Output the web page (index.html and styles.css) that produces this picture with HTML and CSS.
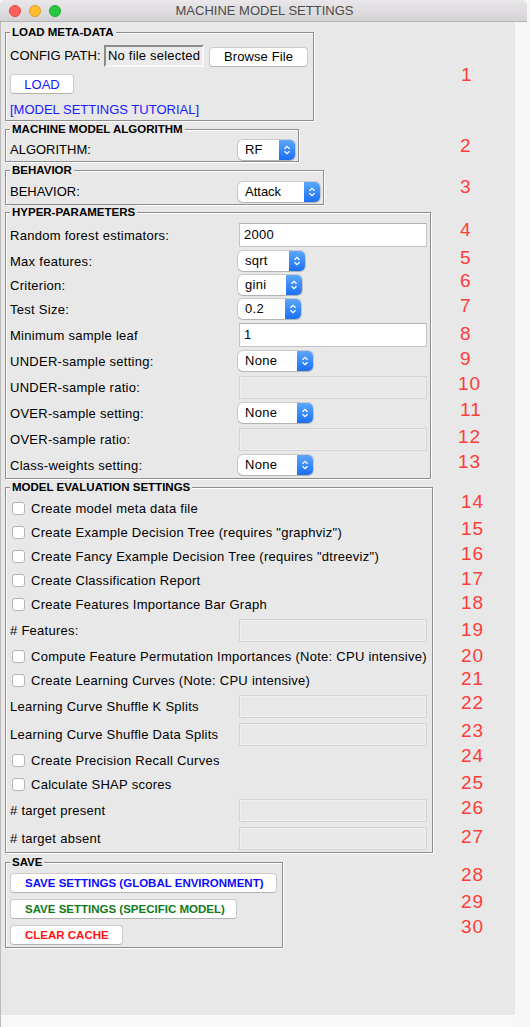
FILE: index.html
```html
<!DOCTYPE html>
<html>
<head>
<meta charset="utf-8">
<title>MACHINE MODEL SETTINGS</title>
<link rel="stylesheet" href="styles.css">
</head>
<body>
<div class="window">
  <div class="titlebar">
    <div class="lights"><span class="light red"></span><span class="light yellow"></span><span class="light green"></span></div>
    <div class="title">MACHINE MODEL SETTINGS</div>
    <div></div>
  </div>
  <div class="client">
    <div class="panel">
      <section class="frame f-load">
        <div class="frame-title">LOAD META-DATA</div>
        <div class="load-row">
          <span class="cfg-label">CONFIG PATH:</span>
          <span class="path-entry">No file selected</span>
          <span class="btn btn-browse">Browse File</span>
        </div>
        <div class="load-row2"><span class="btn btn-load">LOAD</span></div>
        <div class="link-row"><span class="link">[MODEL SETTINGS TUTORIAL]</span></div>
      </section>

      <section class="frame f-algo">
        <div class="frame-title">MACHINE MODEL ALGORITHM</div>
        <div class="row r23">
          <span class="lab">ALGORITHM:</span>
          <span class="select w58"><span class="val">RF</span><span class="arrows"><svg width="8" height="12" viewBox="0 0 8 12"><path d="M1.5 4.8L4 2.3l2.5 2.5M1.5 7.2L4 9.7l2.5-2.5" fill="none" stroke="#fff" stroke-width="1.3"/></svg></span></span>
        </div>
      </section>

      <section class="frame f-beh">
        <div class="frame-title">BEHAVIOR</div>
        <div class="row r25">
          <span class="lab">BEHAVIOR:</span>
          <span class="select w82"><span class="val">Attack</span><span class="arrows"><svg width="8" height="12" viewBox="0 0 8 12"><path d="M1.5 4.8L4 2.3l2.5 2.5M1.5 7.2L4 9.7l2.5-2.5" fill="none" stroke="#fff" stroke-width="1.3"/></svg></span></span>
        </div>
      </section>

      <section class="frame f-hyper">
        <div class="frame-title">HYPER-PARAMETERS</div>
        <div class="row t">
          <span class="lab">Random forest estimators:</span>
          <span class="entry">2000</span>
        </div>
        <div class="row">
          <span class="lab">Max features:</span>
          <span class="select w67"><span class="val">sqrt</span><span class="arrows"><svg width="8" height="12" viewBox="0 0 8 12"><path d="M1.5 4.8L4 2.3l2.5 2.5M1.5 7.2L4 9.7l2.5-2.5" fill="none" stroke="#fff" stroke-width="1.3"/></svg></span></span>
        </div>
        <div class="row">
          <span class="lab">Criterion:</span>
          <span class="select w64"><span class="val">gini</span><span class="arrows"><svg width="8" height="12" viewBox="0 0 8 12"><path d="M1.5 4.8L4 2.3l2.5 2.5M1.5 7.2L4 9.7l2.5-2.5" fill="none" stroke="#fff" stroke-width="1.3"/></svg></span></span>
        </div>
        <div class="row">
          <span class="lab">Test Size:</span>
          <span class="select w63"><span class="val">0.2</span><span class="arrows"><svg width="8" height="12" viewBox="0 0 8 12"><path d="M1.5 4.8L4 2.3l2.5 2.5M1.5 7.2L4 9.7l2.5-2.5" fill="none" stroke="#fff" stroke-width="1.3"/></svg></span></span>
        </div>
        <div class="row t">
          <span class="lab">Minimum sample leaf</span>
          <span class="entry">1</span>
        </div>
        <div class="row">
          <span class="lab">UNDER-sample setting:</span>
          <span class="select w75"><span class="val">None</span><span class="arrows"><svg width="8" height="12" viewBox="0 0 8 12"><path d="M1.5 4.8L4 2.3l2.5 2.5M1.5 7.2L4 9.7l2.5-2.5" fill="none" stroke="#fff" stroke-width="1.3"/></svg></span></span>
        </div>
        <div class="row t">
          <span class="lab">UNDER-sample ratio:</span>
          <span class="entry off"></span>
        </div>
        <div class="row">
          <span class="lab">OVER-sample setting:</span>
          <span class="select w75"><span class="val">None</span><span class="arrows"><svg width="8" height="12" viewBox="0 0 8 12"><path d="M1.5 4.8L4 2.3l2.5 2.5M1.5 7.2L4 9.7l2.5-2.5" fill="none" stroke="#fff" stroke-width="1.3"/></svg></span></span>
        </div>
        <div class="row t">
          <span class="lab">OVER-sample ratio:</span>
          <span class="entry off"></span>
        </div>
        <div class="row">
          <span class="lab">Class-weights setting:</span>
          <span class="select w75"><span class="val">None</span><span class="arrows"><svg width="8" height="12" viewBox="0 0 8 12"><path d="M1.5 4.8L4 2.3l2.5 2.5M1.5 7.2L4 9.7l2.5-2.5" fill="none" stroke="#fff" stroke-width="1.3"/></svg></span></span>
        </div>
      </section>

      <section class="frame f-eval">
        <div class="frame-title">MODEL EVALUATION SETTINGS</div>
        <div class="row"><span class="cb"></span><span>Create model meta data file</span></div>
        <div class="row"><span class="cb"></span><span>Create Example Decision Tree (requires "graphviz")</span></div>
        <div class="row"><span class="cb"></span><span>Create Fancy Example Decision Tree (requires "dtreeviz")</span></div>
        <div class="row"><span class="cb"></span><span>Create Classification Report</span></div>
        <div class="row"><span class="cb"></span><span>Create Features Importance Bar Graph</span></div>
        <div class="row t"><span class="lab"># Features:</span><span class="entry off"></span></div>
        <div class="row"><span class="cb"></span><span>Compute Feature Permutation Importances (Note: CPU intensive)</span></div>
        <div class="row"><span class="cb"></span><span>Create Learning Curves (Note: CPU intensive)</span></div>
        <div class="row t"><span class="lab">Learning Curve Shuffle K Splits</span><span class="entry off"></span></div>
        <div class="row t"><span class="lab">Learning Curve Shuffle Data Splits</span><span class="entry off"></span></div>
        <div class="row"><span class="cb"></span><span>Create Precision Recall Curves</span></div>
        <div class="row"><span class="cb"></span><span>Calculate SHAP scores</span></div>
        <div class="row t"><span class="lab"># target present</span><span class="entry off"></span></div>
        <div class="row t"><span class="lab"># target absent</span><span class="entry off"></span></div>
      </section>

      <section class="frame f-save">
        <div class="frame-title">SAVE</div>
        <div class="save-row"><span class="btn sbtn global">SAVE SETTINGS (GLOBAL ENVIRONMENT)</span></div>
        <div class="save-row"><span class="btn sbtn specific">SAVE SETTINGS (SPECIFIC MODEL)</span></div>
        <div class="save-row last"><span class="btn sbtn clear">CLEAR CACHE</span></div>
      </section>
    </div>
    <div class="side"></div>
  </div>
  <div class="bottom"></div>

  <div class="notes">
    <span class="n n1">1</span><span class="n n2">2</span><span class="n n3">3</span><span class="n n4">4</span><span class="n n5">5</span>
    <span class="n n6">6</span><span class="n n7">7</span><span class="n n8">8</span><span class="n n9">9</span><span class="n n10">10</span>
    <span class="n n11">11</span><span class="n n12">12</span><span class="n n13">13</span><span class="n n14">14</span><span class="n n15">15</span>
    <span class="n n16">16</span><span class="n n17">17</span><span class="n n18">18</span><span class="n n19">19</span><span class="n n20">20</span>
    <span class="n n21">21</span><span class="n n22">22</span><span class="n n23">23</span><span class="n n24">24</span><span class="n n25">25</span>
    <span class="n n26">26</span><span class="n n27">27</span><span class="n n28">28</span><span class="n n29">29</span><span class="n n30">30</span>
  </div>
</div>
</body>
</html>
```

FILE: styles.css
```css
* { box-sizing: border-box; }

body {
  margin: 0;
  width: 530px;
  height: 1027px;
  overflow: hidden;
  background: #f7f7f7;
  font-family: "Liberation Sans", Arial, sans-serif;
  font-size: 13px;
  color: #000;
}

.window {
  position: relative;
  width: 530px;
  height: 1027px;
}

/* ---------- title bar ---------- */
.titlebar {
  width: 527px;
  height: 22px;
  display: grid;
  grid-template-columns: 1fr auto 1fr;
  align-items: center;
  background: linear-gradient(#e9e7e9, #d4d2d4);
  border-bottom: 1px solid #b4b4b4;
  border-radius: 5px 5px 0 0;
}
.lights { display: flex; gap: 8px; padding-left: 9px; }
.light { width: 12px; height: 12px; border-radius: 50%; }
.red { background: #fe5f57; border: 1px solid #e2463f; }
.yellow { background: #febc2e; border: 1px solid #dfa023; }
.green { background: #28c840; border: 1px solid #1dad2b; }
.title {
  font-size: 13px;
  color: #4b4b4b;
  padding-left: 2px;
}

/* ---------- client ---------- */
.client { display: flex; height: 993px; }
.panel {
  width: 515px;
  background: #e8e8e8;
  border-left: 1px solid #bcbcbc;
  padding: 10px 0 0 4px;
}
.side { flex: 1; background: #f7f7f7; }
.bottom {
  width: 515px;
  height: 12px;
  background: #f8f8f8;
  border-left: 1px solid #bcbcbc;
}

/* ---------- label frames ---------- */
.frame {
  border: 1px solid #8d8d8d;
  box-shadow: 1px 1px 0 #fff, inset 1px 1px 0 #fff;
  padding: 0 3px 0 4px;
}
.frame-title {
  width: max-content;
  margin-top: -8px;
  margin-bottom: 2px;
  height: 14px;
  line-height: 14px;
  padding: 0 2px;
  font-size: 11.5px;
  font-weight: bold;
  background: #e8e8e8;
}
.f-load { width: 309px; margin-bottom: 8px; }
.f-algo { width: 294px; margin-bottom: 8px; }
.f-beh { width: 319px; margin-bottom: 7px; }
.f-hyper { width: 426px; margin-bottom: 8px; padding-bottom: 1px; }
.f-eval { width: 428px; margin-bottom: 9px; }
.f-save { width: 278px; }

/* ---------- load frame ---------- */
.load-row { display: flex; align-items: center; height: 29px; }
.cfg-label { width: 94px; }
.path-entry {
  width: 100px;
  height: 22px;
  line-height: 18px;
  padding-left: 2px;
  margin-right: 5px;
  background: #ebebeb;
  border: 2px solid;
  border-color: #8a8a8a #f6f6f6 #f6f6f6 #8a8a8a;
  letter-spacing: 0.2px;
}
.btn {
  display: flex;
  align-items: center;
  justify-content: center;
  height: 20px;
  background: #fff;
  border: 1px solid #cbcbcb;
  border-bottom-color: #b3b3b3;
  border-radius: 4px;
}
.btn-browse { width: 99px; margin-top: 2px; letter-spacing: 0.1px; }
.load-row2 { display: flex; align-items: center; height: 28px; }
.btn-load { width: 64px; color: #1515ff; }
.link-row { display: flex; align-items: center; height: 22px; }
.link { color: #1a1aff; }

/* ---------- rows ---------- */
.row { display: flex; align-items: center; height: 24px; letter-spacing: 0.27px; }
.row.t { height: 28px; }
.row.r23 { height: 23px; letter-spacing: 0; }
.row.r25 { height: 25px; letter-spacing: 0; }
.lab { width: 228px; flex: none; }

.entry {
  width: 188px;
  height: 24px;
  margin-left: 1px;
  padding-left: 4px;
  line-height: 22px;
  background: #fff;
  border: 1px solid #c4c4c4;
  border-top-color: #b2b2b2;
}
.entry.off {
  height: 23px;
  background: #e8e8e8;
  border: 1px solid #d3d3d3;
  box-shadow: inset 0 0 0 1px #efefef;
}

.select {
  display: flex;
  height: 20px;
  background: #fff;
  border-radius: 5px;
  box-shadow: 0 0 0 1px rgba(0, 0, 0, 0.13), 0 1px 1px rgba(0, 0, 0, 0.12);
}
.select .val { flex: 1; padding-left: 7px; line-height: 20px; }
.select .arrows {
  width: 16px;
  display: flex;
  align-items: center;
  justify-content: center;
  background: linear-gradient(#5ba7fd, #1b6ff4);
  border-radius: 0 5px 5px 0;
}
.w58 { width: 58px; }
.w82 { width: 82px; }
.w67 { width: 67px; }
.w64 { width: 64px; }
.w63 { width: 63px; }
.w75 { width: 75px; }

.cb {
  flex: none;
  width: 13px;
  height: 13px;
  margin: 0 6px 0 2px;
  background: #fff;
  border: 1px solid #b6b6b6;
  border-radius: 3px;
}

/* ---------- save frame ---------- */
.save-row { display: flex; align-items: flex-start; height: 26px; padding-top: 2px; }
.save-row.last { height: 24px; }
.sbtn { font-size: 11.5px; font-weight: bold; justify-content: flex-start; padding-left: 14px; }
.global { width: 267px; color: #0b0bff; }
.specific { width: 227px; color: #107a1c; }
.clear { width: 113px; color: #ff1010; }

/* ---------- annotation numbers ---------- */
.n {
  position: absolute;
  left: 460px;
  font-size: 19px;
  line-height: 20px;
  letter-spacing: 1px;
  color: #fc3d3a;
}
.n1 { top: 65px; left: 461px; }
.n2 { top: 136px; }
.n3 { top: 177px; }
.n4 { top: 220px; }
.n5 { top: 248px; }
.n6 { top: 271px; }
.n7 { top: 296px; }
.n8 { top: 324px; }
.n9 { top: 349px; }
.n10 { top: 374px; left: 458px; }
.n11 { top: 400px; }
.n12 { top: 427px; left: 458px; }
.n13 { top: 452px; left: 458px; }
.n14 { top: 492px; left: 461px; }
.n15 { top: 519px; left: 461px; }
.n16 { top: 544px; left: 461px; }
.n17 { top: 569px; left: 461px; }
.n18 { top: 593px; left: 461px; }
.n19 { top: 620px; left: 461px; }
.n20 { top: 646px; left: 461px; }
.n21 { top: 669px; left: 461px; }
.n22 { top: 693px; left: 461px; }
.n23 { top: 721px; left: 461px; }
.n24 { top: 746px; left: 461px; }
.n25 { top: 773px; left: 461px; }
.n26 { top: 798px; left: 461px; }
.n27 { top: 827px; left: 461px; }
.n28 { top: 865px; left: 461px; }
.n29 { top: 892px; left: 461px; }
.n30 { top: 917px; left: 461px; }
```
